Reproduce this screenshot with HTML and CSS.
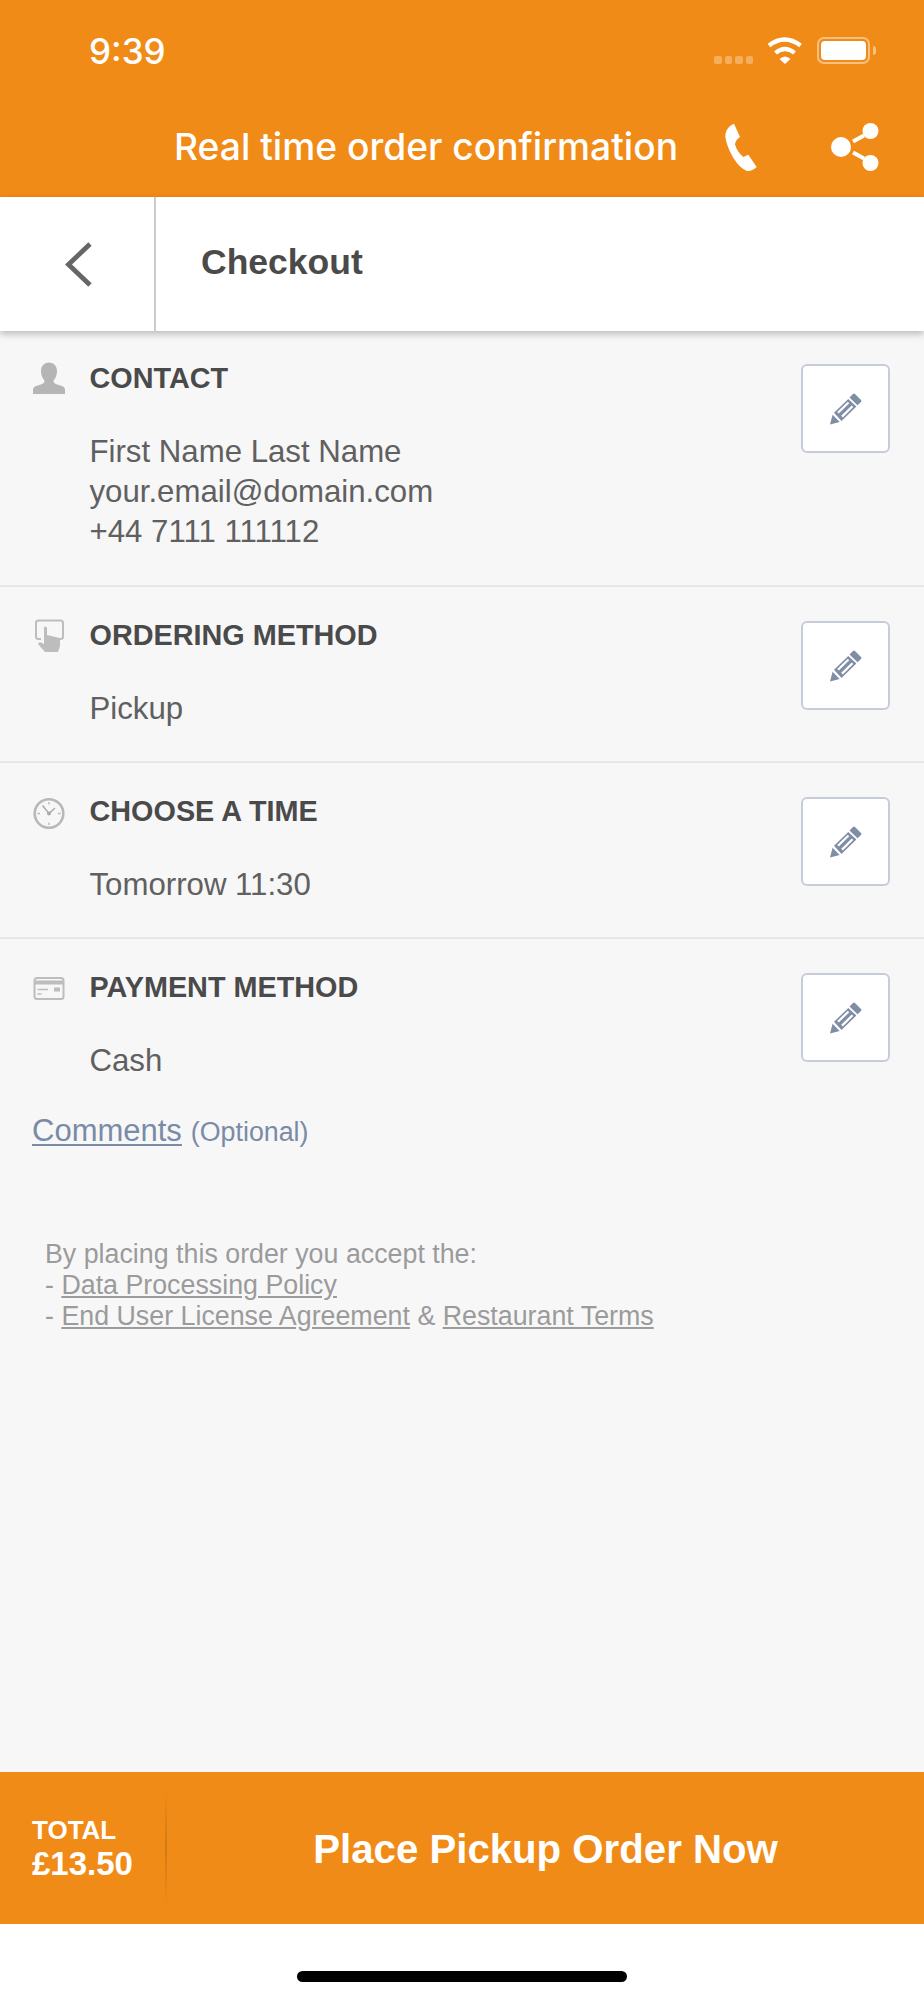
FILE: index.html
```html
<!DOCTYPE html>
<html lang="en">
<head>
<meta charset="utf-8">
<title>Checkout</title>
<link rel="stylesheet" href="styles.css">
</head>
<body>
<div class="app">
  <header class="top">
    <div class="status">
      <span class="clock">9:39</span>
      <div class="status-icons">
        <div class="signal"><i></i><i></i><i></i><i></i></div>
        <svg class="wifi" width="36" height="27" viewBox="0 0 36 27"><path d="M2 8.500Q17.750-3.500 33.500 8.500M8.500 16Q18 8 27.500 16" fill="none" stroke="#fff" stroke-width="4.200"/><path d="M12.500 22Q18 17 23.500 22L18 27Z" fill="#fff"/></svg>
        <div class="battery"><div class="battery-fill"></div></div>
        <div class="battery-nub"></div>
      </div>
    </div>
    <div class="brandbar">
      <span class="brand">Real time order confirmation</span>
      <svg class="phone" width="32" height="49" viewBox="0 0 32 49"><path d="M9 .7L15 14Q10.500 17 10 21.300Q12 29 18.300 34L23.300 31.700L31.700 44Q27 48.500 22 48C12 44 3 28 .5 15C-.3 9 3 3 9 .7Z" fill="#fff"/></svg>
      <svg class="share" width="48" height="48" viewBox="0 0 48 48"><circle cx="10" cy="24" r="10" fill="#fff"/><circle cx="39.500" cy="8" r="8" fill="#fff"/><circle cx="39.500" cy="40" r="8" fill="#fff"/><path d="M22 18.500L33 12.500M22 29.500L33 35.500" stroke="#fff" stroke-width="4"/></svg>
    </div>
  </header>

  <nav class="nav">
    <div class="back">
      <svg width="30" height="47" viewBox="0 0 30 47"><path d="M27 3L5.500 23.500L27 44" fill="none" stroke="#666" stroke-width="4.800"/></svg>
    </div>
    <h1 class="nav-title">Checkout</h1>
  </nav>

  <main class="content">
    <section class="row row-first">
      <svg class="row-icon" width="34" height="34" viewBox="0 0 34 34"><path d="M17 .5C21.500.5 25 4 25 9C25 13 23.500 16.500 21.500 18.500C21.500 20.500 22.500 21.500 25 22.500C30 24 33 24.500 33 28V32H1V28C1 24.500 4 24 9 22.500C11.500 21.500 12.500 20.500 12.500 18.500C10.500 16.500 9 13 9 9C9 4 12.500.5 17 .5Z" fill="#b5b5b5"/></svg>
      <div class="row-body">
        <h2 class="row-title">CONTACT</h2>
        <p class="row-text">First Name Last Name<br>your.email@domain.com<br>+44 7111 111112</p>
      </div>
      <button class="edit"><svg width="32" height="32" viewBox="0 0 32 32"><use href="#pencil"/></svg></button>
    </section>

    <section class="row">
      <svg class="row-icon" width="34" height="34" viewBox="0 0 34 34"><path d="M9 20H6.500Q4 20 4 17.500V4Q4 1.500 6.500 1.500H28.500Q31 1.500 31 4V17.500Q31 20 28.500 20H26" fill="none" stroke="#bdbdbd" stroke-width="2"/><path d="M12 9Q12 7.500 13.500 7.500Q15 7.500 15 9V16L19 17L28 19V27L26 33H13L6 25Q6.500 22.500 9 23.500L12 25Z" fill="#bdbdbd"/></svg>
      <div class="row-body">
        <h2 class="row-title">ORDERING METHOD</h2>
        <p class="row-text">Pickup</p>
      </div>
      <button class="edit"><svg width="32" height="32" viewBox="0 0 32 32"><use href="#pencil"/></svg></button>
    </section>

    <section class="row">
      <svg class="row-icon" width="34" height="34" viewBox="0 0 34 34"><circle cx="17" cy="18.500" r="14.300" fill="none" stroke="#b8b8b8" stroke-width="2.600"/><path d="M17 7V9.500M17 27.500V30M5.500 18.500H8M26 18.500H28.500" stroke="#b8b8b8" stroke-width="1.300"/><path d="M10.500 10.500L17 18.500L23 13" fill="none" stroke="#aaa" stroke-width="1.500"/><circle cx="17" cy="18.500" r="2" fill="#aaa"/></svg>
      <div class="row-body">
        <h2 class="row-title">CHOOSE A TIME</h2>
        <p class="row-text">Tomorrow 11:30</p>
      </div>
      <button class="edit"><svg width="32" height="32" viewBox="0 0 32 32"><use href="#pencil"/></svg></button>
    </section>

    <section class="row row-last">
      <svg class="row-icon" width="34" height="34" viewBox="0 0 34 34"><rect x="2.500" y="7" width="29" height="21" rx="2.500" fill="none" stroke="#bdbdbd" stroke-width="2"/><path d="M2.500 11.500H31.500" stroke="#bdbdbd" stroke-width="4"/><path d="M5.500 18.500H16M5.500 23H9.500" stroke="#bdbdbd" stroke-width="1.500"/><rect x="22" y="16.500" width="6" height="4" fill="#bdbdbd"/></svg>
      <div class="row-body">
        <h2 class="row-title">PAYMENT METHOD</h2>
        <p class="row-text">Cash</p>
      </div>
      <button class="edit"><svg width="32" height="32" viewBox="0 0 32 32"><use href="#pencil"/></svg></button>
    </section>

    <p class="comments"><a class="comments-link">Comments</a> <span class="optional">(Optional)</span></p>

    <p class="legal">By placing this order you accept the:<br>- <a>Data Processing Policy</a><br>- <a>End User License Agreement</a> &amp; <a>Restaurant Terms</a></p>
  </main>

  <footer class="cta">
    <div class="total">
      <span class="total-label">TOTAL</span>
      <span class="total-value">£13.50</span>
    </div>
    <div class="place">Place Pickup Order Now</div>
  </footer>

  <div class="home"><div class="home-bar"></div></div>
</div>

<svg class="defs" width="0" height="0" aria-hidden="true">
  <symbol id="pencil" viewBox="0 0 32 32">
    <path d="M0 31.500L2.600 21.800L9.700 28.900Z" fill="#7f8ea5"/>
    <path d="M4 19.800L18.300 6L26.400 13.500L11.500 28Z" fill="#7f8ea5"/>
    <path d="M8 19.800L18.500 9.500M12 23.600L22.500 13.300" stroke="#fff" stroke-width="2.200" fill="none"/>
    <path d="M23 1Q24 0 25 1L31 7Q32 8 31 9L27.500 12.300L19.500 4.500Z" fill="#7f8ea5"/>
  </symbol>
</svg>
</body>
</html>
```
FILE: styles.css
```css
* { box-sizing: border-box; }
html, body { margin: 0; padding: 0; }
body { width: 924px; height: 2000px; overflow: hidden; background: #fff; font-family: "Liberation Sans", Arial, sans-serif; }
.app { display: flex; flex-direction: column; width: 924px; height: 2000px; }
.defs { position: absolute; }

.top { height: 197px; background: #f18b18; color: #fff; display: flex; flex-direction: column; }
.status { height: 100px; display: flex; align-items: flex-start; padding: 30px 48px 0 89px; justify-content: space-between; }
.clock { font-family: Inter, sans-serif; font-weight: 500; font-size: 35px; line-height: 42px; }
.status-icons { display: flex; align-items: flex-start; padding-top: 7px; }
.signal { display: flex; gap: 3px; margin-top: 19px; margin-right: 14px; }
.signal i { display: block; width: 7.500px; height: 7.500px; border-radius: 2px; background: rgba(255,255,255,.3); }
.wifi { margin-right: 14px; }
.battery { width: 53px; height: 27px; border: 2px solid rgba(255,255,255,.45); border-radius: 7px; padding: 2px; }
.battery-fill { width: 100%; height: 100%; background: #fff; border-radius: 4px; }
.battery-nub { width: 3px; height: 9px; margin: 9px 0 0 3px; background: rgba(255,255,255,.45); border-radius: 0 3px 3px 0; }

.brandbar { display: flex; align-items: center; padding-left: 174px; height: 48px; margin-top: 23px; }
.brand { font-family: Inter, sans-serif; font-weight: 500; font-size: 37.200px; line-height: 48px; width: 551px; white-space: nowrap; }
.phone { flex: none; }
.share { flex: none; margin-left: 74px; }

.nav { position: relative; z-index: 2; height: 134px; background: #fff; display: flex; align-items: center; box-shadow: 0 3px 7px rgba(0,0,0,.25); }
.back { width: 156px; height: 100%; border-right: 2px solid #cbcbcb; display: flex; align-items: center; padding-left: 63px; }
.nav-title { margin: -4px 0 0 45px; color: #4a4a4a; font-size: 35.500px; font-weight: 700; line-height: 40px; }

.content { flex: 1; background: #f7f7f8; display: flex; flex-direction: column; }
.row { display: flex; align-items: flex-start; padding: 28px 34px 32px 32px; border-bottom: 2px solid #e7e7e8; }
.row-first { padding-top: 27px; padding-bottom: 33px; }
.row-last { border-bottom: 0; padding-bottom: 0; }
.row-icon { flex: none; margin-top: 4px; margin-right: 23.500px; }
.row-body { flex: 1; }
.row-title { margin: 0 0 34px; color: #4a4a4a; font-size: 28.800px; font-weight: 700; line-height: 40px; }
.row-text { margin: 0; color: #606060; font-size: 31.200px; line-height: 40px; }
.edit { flex: none; width: 89px; height: 89px; margin-top: 6px; padding: 0; background: #fff; border: 2px solid #c6cdd9; border-radius: 6px; display: flex; align-items: center; justify-content: center; }

.comments { margin: 30px 0 0 32px; line-height: 40px; color: #7a8ba6; }
.comments-link { font-size: 31px; text-decoration: underline; text-decoration-thickness: 1.500px; text-underline-offset: 3px; }
.optional { font-size: 26.800px; margin-left: 4.500px; }

.legal { margin: 83px 0 0 45px; color: #9b9b9b; font-size: 26.800px; line-height: 31px; }
.legal a { text-decoration: underline; }

.cta { height: 152px; background: #f18b18; display: flex; color: #fff; align-items: center; }
.total { width: 167px; height: 120px; padding-left: 32px; display: flex; flex-direction: column; justify-content: center; background: linear-gradient(to bottom, rgba(205,120,20,0), #cf7a14 50%, rgba(205,120,20,0)) right center / 2px 100% no-repeat; }
.total-label { font-size: 26px; font-weight: 700; line-height: 30px; }
.total-value { font-size: 33px; font-weight: 700; line-height: 37px; }
.place { flex: 1; text-align: center; font-size: 40.200px; font-weight: 700; padding-top: 4px; }

.home { height: 76px; background: #fff; padding: 47px 0 0 297px; }
.home-bar { width: 330px; height: 11px; border-radius: 6px; background: #000; }
```
